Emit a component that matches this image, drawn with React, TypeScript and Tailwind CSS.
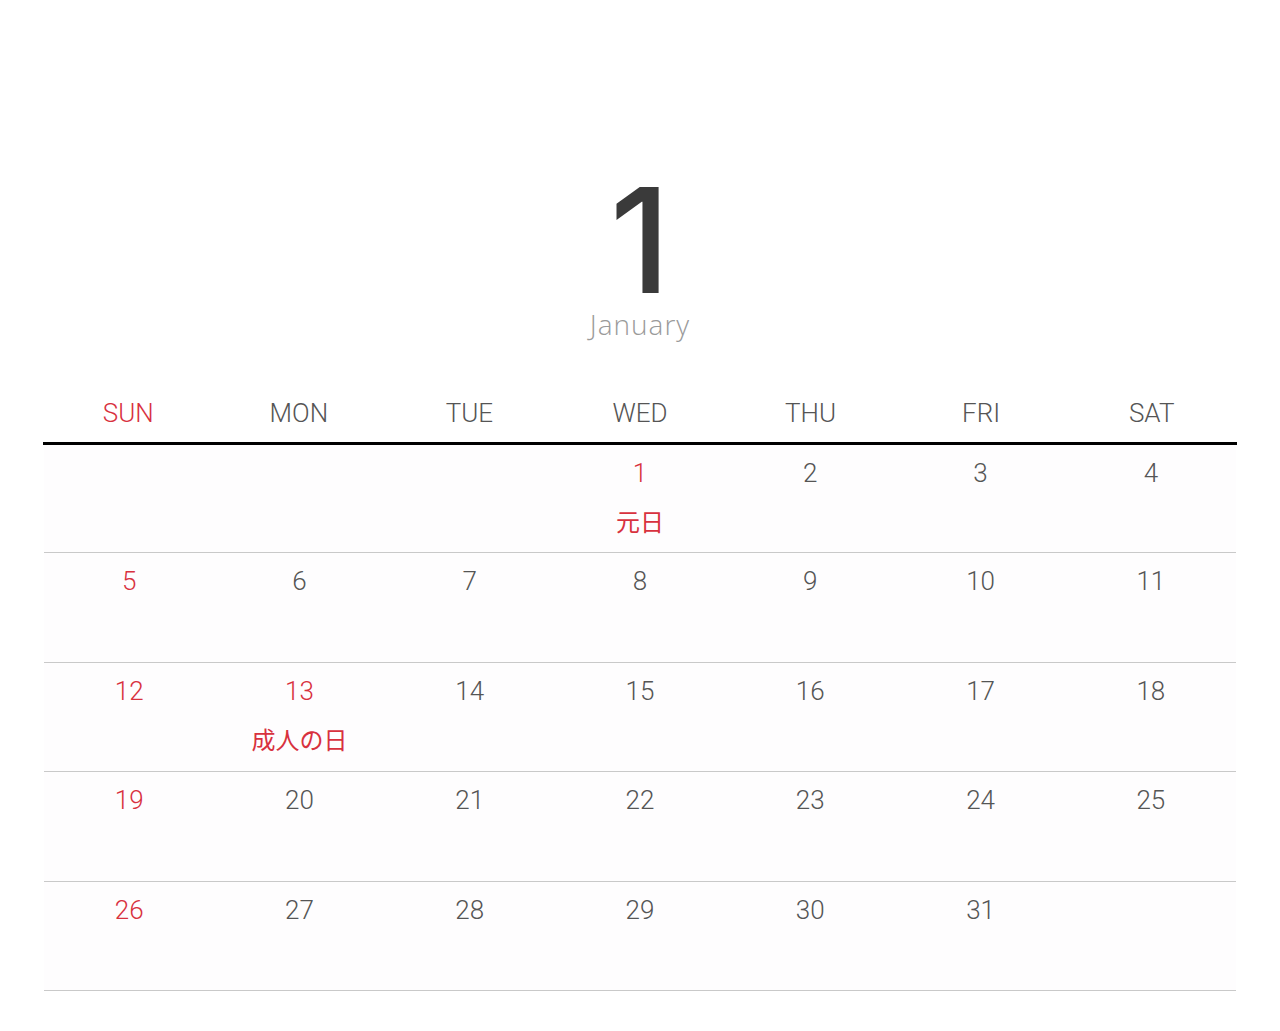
const weekdays = ["SUN", "MON", "TUE", "WED", "THU", "FRI", "SAT"];

type Day = { n: number | null; holiday?: string };

const holidays: Record<number, string> = {
  1: "元日",
  13: "成人の日",
};

// January starts on Wednesday
const buildWeeks = () => {
  const cells: Day[] = [];
  for (let i = 0; i < 3; i++) cells.push({ n: null });
  for (let d = 1; d <= 31; d++) cells.push({ n: d, holiday: holidays[d] });
  while (cells.length % 7) cells.push({ n: null });
  const weeks: Day[][] = [];
  for (let i = 0; i < cells.length; i += 7) weeks.push(cells.slice(i, i + 7));
  return weeks;
};

const App = () => {
  const weeks = buildWeeks();

  return (
    <div className="min-h-[1031px] w-full bg-white font-['Roboto',sans-serif]">
      <div className="flex flex-col items-center pt-[175px]">
        <div className="font-['Inter',sans-serif] text-[146px] leading-[130px] font-medium text-[#3a3a3a]">
          1
        </div>
        <div className="mt-[5px] font-['Open_Sans',sans-serif] text-[28px] leading-[28px] font-light tracking-[1px] text-[#9a9a9a]">
          January
        </div>
      </div>

      <div className="mx-auto mt-[62px] w-[1192px]">
        <div className="-mx-px grid grid-cols-7 border-b-[3px] border-black pb-[16px]">
          {weekdays.map((w, i) => (
            <div
              key={w}
              className={
                "text-center text-[26px] leading-[26px] font-light " +
                (i === 0 ? "text-[#d8313e]" : "text-[#555555]")
              }
            >
              {w}
            </div>
          ))}
        </div>

        {weeks.map((week, wi) => (
          <div
            key={wi}
            className={
              "grid grid-cols-7 border-b border-[#c9c9c9] " +
              (wi === 0 ? "h-[108px]" : "h-[109.5px]")
            }
          >
            {week.map((day, di) => (
              <div
                key={di}
                className="flex flex-col items-center bg-[#fefdfe] pt-[15px]"
              >
                {day.n !== null && (
                  <>
                    <div
                      className={
                        "text-[26px] leading-[26px] font-light " +
                        (di === 0 || day.holiday
                          ? "text-[#d8313e]"
                          : "text-[#555555]")
                      }
                    >
                      {day.n}
                    </div>
                    {day.holiday && (
                      <div className="mt-[23px] font-['Noto_Sans_CJK_JP',sans-serif] text-[24px] leading-[24px] text-[#d8313e]">
                        {day.holiday}
                      </div>
                    )}
                  </>
                )}
              </div>
            ))}
          </div>
        ))}
      </div>
    </div>
  );
};

export default App;
